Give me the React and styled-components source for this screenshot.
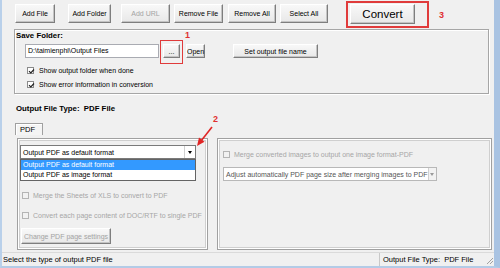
import React from 'react'
import styled, { createGlobalStyle } from 'styled-components'

const Global = createGlobalStyle`
  html, body {
    margin: 0;
    padding: 0;
    background: #f0f0f0;
  }
  * { box-sizing: border-box; }
`;

const Window = styled.div`
  width: 500px;
  height: 268px;
  display: flex;
  flex-direction: column;
  background: #f0f0f0;
  border-left: 2px solid #b9d0ea;
  border-right: 6px solid #a9c3e2;
  border-bottom: 2px solid #b3cbe6;
  font-family: "Liberation Sans", Arial, sans-serif;
  font-size: 7px;
  color: #000;
  overflow: hidden;
`;

const Toolbar = styled.div`
  display: flex;
  align-items: flex-start;
  height: 29px;
  padding: 4px 0 0 13px;
  flex-shrink: 0;
`;

const Btn = styled.button`
  font-family: "Liberation Sans", Arial, sans-serif;
  font-size: ${p => p.$fs || 7}px;
  width: ${p => p.$w}px;
  height: ${p => p.$h || 19}px;
  margin-left: ${p => p.$ml || 0}px;
  padding: 0;
  color: ${p => (p.disabled ? '#a3a3a3' : '#000')};
  background: linear-gradient(#f8f8f8, #e8e8e8);
  border: 1px solid;
  border-color: #ffffff #7e7e7e #7e7e7e #ffffff;
  box-shadow: inset -1px -1px 0 #c4c4c4;
  flex-shrink: 0;
  white-space: nowrap;
`;

const RedBox = styled.div`
  margin-left: 18px;
  margin-top: -3px;
  border: 2px solid #e03b3b;
  padding: 1px 12px 2px 2px;
`;

const Marker = styled.span`
  color: #e03030;
  font-weight: bold;
  font-size: 9px;
  font-family: "Liberation Sans", Arial, sans-serif;
  margin-left: ${p => p.$ml || 0}px;
  margin-top: ${p => p.$mt || 0}px;
`;

const Body = styled.div`
  padding-left: 12px;
  display: flex;
  flex-direction: column;
`;

const GroupBox = styled.div`
  width: 475px;
  height: 65px;
  border: 1px solid #a6a6a6;
  box-shadow: inset 1px 1px 0 #fff, 1px 1px 0 #fff;
  padding: 0 0 0 1px;
`;

const Legend = styled.div`
  font-weight: bold;
  font-size: 7.8px;
  line-height: 10px;
  margin-top: 1px;
`;

const FolderRow = styled.div`
  display: flex;
  align-items: center;
  height: 14px;
  margin-top: 3px;
  padding-left: 9px;
`;

const PathInput = styled.div`
  width: 134px;
  height: 14px;
  background: #fff;
  border: 1px solid #a9abb2;
  font-size: 7px;
  line-height: 12px;
  padding-left: 2px;
`;

const Marked = styled.div`
  position: relative;
  margin-left: ${p => p.$ml || 0}px;
  &::after {
    content: '';
    position: absolute;
    left: -3px;
    right: -3px;
    top: -4px;
    bottom: -6px;
    border: 1.5px solid #e03b3b;
  }
`;

const MarkerAbs = styled(Marker)`
  position: absolute;
  right: -10px;
  top: -14px;
`;

const CheckRow = styled.div`
  display: flex;
  align-items: center;
  height: 14px;
  padding-left: ${p => p.$pl || 0}px;
  margin-top: ${p => p.$mt || 0}px;
  color: ${p => (p.$disabled ? '#a6a6a6' : '#000')};
  white-space: nowrap;
`;

const Box = styled.span`
  width: 7px;
  height: 7px;
  border: 1px solid ${p => (p.$disabled ? '#b5b5b5' : '#8a8a8a')};
  background: ${p => (p.$disabled ? '#f2f2f2' : '#fff')};
  margin-right: ${p => p.$gap || 5}px;
  position: relative;
  flex-shrink: 0;
`;

const Tick = () => (
  <svg width="7" height="7" viewBox="0 0 7 7" style={{ position: 'absolute', left: 0, top: 0 }}>
    <path d="M1 3.2 L2.8 5 L6 1.5" fill="none" stroke="#222" strokeWidth="1.2" />
  </svg>
);

const TypeLabel = styled.div`
  font-weight: bold;
  font-size: 7.8px;
  line-height: 10px;
  margin: 10px 0 0 2px;
  white-space: pre;
`;

const TabStrip = styled.div`
  display: flex;
  margin-top: 9px;
  padding-left: 1px;
`;

const Tab = styled.div`
  width: 28px;
  height: 12px;
  border: 1px solid #a0a0a0;
  border-bottom: none;
  box-shadow: inset 1px 1px 0 #fff;
  background: #f4f4f4;
  padding-left: 4px;
  line-height: 11px;
  font-size: 7.5px;
`;

const Panels = styled.div`
  position: relative;
  display: flex;
  gap: 9px;
  margin: 3px 0 0 3px;
  height: 112px;
`;

const Panel = styled.div`
  width: ${p => p.$w}px;
  height: 100%;
  border: 1px solid #a0a0a0;
  box-shadow: inset 1px 1px 0 #fff, inset -1px -1px 0 #fff, inset 0 0 0 2px #cfcfcf;
  padding: ${p => p.$pad};
  display: flex;
  flex-direction: column;
  align-items: flex-start;
`;

const Combo = styled.div`
  position: relative;
  width: ${p => p.$w}px;
  height: 14px;
  margin-top: ${p => p.$mt || 0}px;
  background: #fff;
  border: 1px solid ${p => (p.$disabled ? '#b8b8b8' : '#7a7a7a')};
  display: flex;
  align-items: center;
  flex-shrink: 0;
`;

const ComboText = styled.span`
  flex: 1;
  padding-left: 2px;
  white-space: nowrap;
  color: ${p => (p.$disabled ? '#555' : '#000')};
`;

const ComboArrow = styled.span`
  width: 11px;
  height: 12px;
  border-left: 1px solid #d0d0d0;
  background: ${p => (p.$disabled ? '#f2f2f2' : '#fff')};
  display: flex;
  align-items: center;
  justify-content: center;
  &::before {
    content: '';
    border-left: 2.5px solid transparent;
    border-right: 2.5px solid transparent;
    border-top: 3px solid ${p => (p.$disabled ? '#9a9a9a' : '#000')};
  }
`;

const DropList = styled.div`
  position: absolute;
  left: -1px;
  top: 13px;
  width: 176px;
  background: #fff;
  border: 1px solid #646464;
  z-index: 2;
`;

const DropItem = styled.div`
  height: 10px;
  line-height: 10px;
  padding-left: 2px;
  background: ${p => (p.$selected ? '#3399ff' : '#fff')};
  color: ${p => (p.$selected ? '#fff' : '#000')};
  white-space: nowrap;
`;

const ArrowNote = styled.div`
  position: absolute;
  left: 175px;
  top: -24px;
  width: 30px;
  height: 34px;
  z-index: 3;
`;

const StatusBar = styled.div`
  margin-top: auto;
  height: 14px;
  display: flex;
  align-items: center;
  border-top: 1px solid #dadada;
  font-size: 7.5px;
  flex-shrink: 0;
`;

const StatusLeft = styled.div`
  flex: 1;
  padding-left: 1px;
`;

const StatusRight = styled.div`
  width: 115px;
  height: 100%;
  border-left: 1px solid #c8c8c8;
  padding-left: 3px;
  display: flex;
  align-items: center;
  justify-content: space-between;
`;

const Grip = () => (
  <svg width="8" height="10" viewBox="0 0 8 10">
    <path d="M7 3 L1 9 M7 6 L4 9" stroke="#a0a0a0" strokeWidth="1" />
  </svg>
);

export default function App() {
  return (
    <>
      <Global />
      <Window>
        <Toolbar>
          <Btn $w={40}>Add File</Btn>
          <Btn $w={43} $ml={13}>Add Folder</Btn>
          <Btn $w={49} $ml={10} disabled>Add URL</Btn>
          <Btn $w={49} $ml={4}>Remove File</Btn>
          <Btn $w={48} $ml={5}>Remove All</Btn>
          <Btn $w={48} $ml={4}>Select All</Btn>
          <RedBox>
            <Btn $w={65} $h={20} $fs={11.5}>Convert</Btn>
          </RedBox>
          <Marker $ml={10} $mt={6}>3</Marker>
        </Toolbar>

        <Body>
          <GroupBox>
            <Legend>Save Folder:</Legend>
            <FolderRow>
              <PathInput>D:\taimienphi\Output Files</PathInput>
              <Marked $ml={4}>
                <Btn $w={17} $h={14}>...</Btn>
                <MarkerAbs>1</MarkerAbs>
              </Marked>
              <Btn $w={19} $h={14} $ml={6}>Open</Btn>
              <Btn $w={85} $h={14} $ml={28}>Set output file name</Btn>
            </FolderRow>
            <CheckRow $pl={11} $mt={5}>
              <Box><Tick /></Box>Show output folder when done
            </CheckRow>
            <CheckRow $pl={11}>
              <Box><Tick /></Box>Show error information in conversion
            </CheckRow>
          </GroupBox>

          <TypeLabel>Output File Type:  PDF File</TypeLabel>

          <TabStrip>
            <Tab>PDF</Tab>
          </TabStrip>

          <Panels>
            <Panel $w={191} $pad="6px 0 0 2px">
              <Combo $w={176}>
                <ComboText>Output PDF as default format</ComboText>
                <ComboArrow />
                <DropList>
                  <DropItem $selected>Output PDF as default format</DropItem>
                  <DropItem>Output PDF as image format</DropItem>
                </DropList>
              </Combo>
              <CheckRow $pl={2} $mt={29} $disabled>
                <Box $disabled $gap={4} />Merge the Sheets of XLS to convert to PDF
              </CheckRow>
              <CheckRow $pl={2} $mt={6} $disabled>
                <Box $disabled $gap={4} />Convert each page content of DOC/RTF to single PDF
              </CheckRow>
              <Btn $w={90} $h={16} $ml={1} disabled style={{ marginTop: 6 }}>
                Change PDF page settings
              </Btn>
            </Panel>
            <Panel $w={275} $pad="8px 0 0 5px">
              <CheckRow $disabled>
                <Box $disabled $gap={4} />Merge converted images to output one image format-PDF
              </CheckRow>
              <Combo $w={214} $mt={6} $disabled>
                <ComboText $disabled>Adjust automatically PDF page size after merging images to PDF</ComboText>
                <ComboArrow $disabled />
              </Combo>
            </Panel>
            <ArrowNote>
              <svg width="30" height="34" viewBox="0 0 30 34">
                <path d="M20 13 L9 27" stroke="#e02525" strokeWidth="1.6" />
                <path d="M5 32 L7 23.5 L12.5 27.8 Z" fill="#e02525" />
              </svg>
              <Marker style={{ position: 'absolute', left: 21, top: 0 }}>2</Marker>
            </ArrowNote>
          </Panels>
        </Body>

        <StatusBar>
          <StatusLeft>Select the type of output PDF file</StatusLeft>
          <StatusRight>
            <span style={{ whiteSpace: 'pre' }}>Output File Type:  PDF File</span>
            <Grip />
          </StatusRight>
        </StatusBar>
      </Window>
    </>
  );
}
